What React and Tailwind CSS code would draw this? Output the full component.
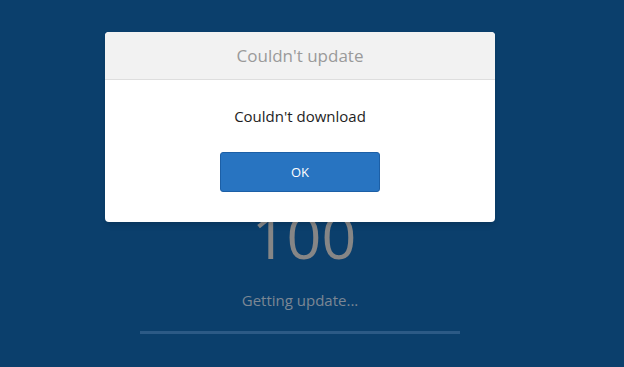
const font = { fontFamily: '"Open Sans", "Noto Sans", sans-serif' };

const UpdateDialog = ({ title, message, onOk }) => {
    return (
        <div className="absolute left-[105px] top-[32px] w-[390px] overflow-hidden rounded-[4px] bg-white shadow-md">
            <div className="flex h-[48px] items-center justify-center border-b border-[#dedede] bg-[#f2f2f2] pt-[1px]">
                <h2 className="text-[17px] text-[#9a9a9a]">{title}</h2>
            </div>
            <div className="flex flex-col items-center pt-[26px] pb-[30px]">
                <p className="text-[15px] leading-[20px] text-[#1e1e1e]">{message}</p>
                <button
                    onClick={onOk}
                    className="mt-[26px] h-[40px] w-[160px] rounded-[3px] border border-[#1c5fa6] bg-[#2874c1] pt-[2px] text-[13px] text-white"
                >
                    OK
                </button>
            </div>
        </div>
    );
};

export default function App() {
    return (
        <div className="relative h-[367px] w-full overflow-hidden bg-[#0b3f6c]" style={font}>
            <div className="flex w-[600px] flex-col items-center pt-[205px]">
                <div className="pl-[8px] text-[61px] font-normal leading-none text-[#868686]">100</div>
                <p className="mt-[24px] text-[15px] leading-[20px] text-[#7b8794]">Getting update...</p>
                <div className="mt-[21px] h-[3px] w-[320px] bg-[#2c5a86]" />
            </div>
            <UpdateDialog title="Couldn't update" message="Couldn't download" />
        </div>
    );
}
